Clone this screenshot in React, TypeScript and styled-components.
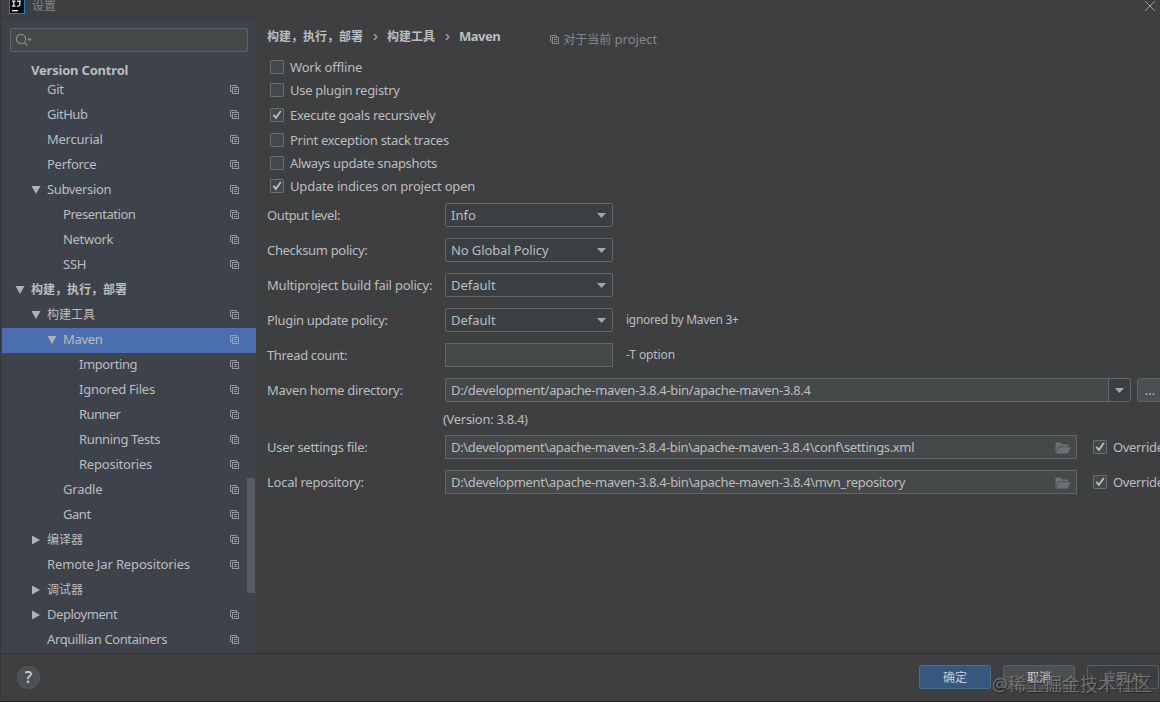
import React from "react";
import styled, { createGlobalStyle, css } from "styled-components";

const GlobalStyle = createGlobalStyle`
  * { box-sizing: border-box; }
  html, body, #root { height: 100%; }
  body {
    margin: 0;
    overflow: hidden;
    background: #3c3f41;
    color: #bbbdbf;
    font-family: "Noto Sans", "Noto Sans CJK SC", sans-serif;
    font-size: 13px;
    line-height: 18px;
  }
`;

const Window = styled.div`
  position: relative;
  width: 1160px;
  height: 702px;
  display: flex;
  flex-direction: column;
  overflow: hidden;
  background: #3d3f41;
  border-left: 1px solid #35383a;
  border-bottom: 1px solid #1f1d1f;
  white-space: nowrap;
`;

const TitleBar = styled.header`
  height: 20px;
  flex: none;
  display: flex;
  align-items: flex-start;
  padding: 0 4px 0 8px;
  color: #85888a;
`;

const TitleText = styled.span`
  margin: -3px auto 0 7px;
  font-size: 12px;
`;

const Logo = styled.svg`
  width: 16px;
  height: 14px;
  flex: none;
`;

const CloseIcon = styled.svg`
  width: 12px;
  height: 12px;
  flex: none;
`;

const Body = styled.div`
  height: 633px;
  flex: none;
  display: flex;
`;

const Sidebar = styled.nav`
  width: 255px;
  flex: none;
  position: relative;
  padding: 8px 0 0 1px;
  background: #3d424b;
  overflow: hidden;
`;

const Search = styled.div`
  width: 238px;
  height: 24px;
  margin: 0 0 6px 8px;
  padding: 4px 4px;
  border: 1px solid #626567;
  border-radius: 2px;
  background: #45494a;

  svg { display: block; }
`;

const RowBox = styled.div<{ $level: number; $selected?: boolean; $short?: boolean }>`
  height: ${(p) => (p.$short ? 20 : 25)}px;
  display: flex;
  align-items: center;
  padding-top: ${(p) => (p.$short ? 3 : 0)}px;
  padding-right: 16px;
  padding-bottom: ${(p) => (p.$short ? 0 : 3)}px;
  padding-left: ${(p) => p.$level * 16 - 3}px;
  ${(p) => p.$selected && css`background: #4b6eaf;`}
`;

const Arrow = styled.svg`
  width: 10px;
  height: 10px;
  margin-top: 1px;
  margin-right: 6px;
  flex: none;
  fill: #afb1b3;
`;

const RowLabel = styled.span<{ $bold?: boolean; $cjk?: boolean; $ls?: number }>`
  flex: 1;
  padding-top: ${(p) => (p.$cjk ? 1 : 0)}px;
  font-weight: ${(p) => (p.$bold ? 700 : 400)};
  font-size: ${(p) => (p.$cjk ? 12 : 13)}px;
  letter-spacing: ${(p) => p.$ls ?? 0}px;
`;

const RowIcon = styled.span<{ $selected?: boolean }>`
  display: flex;
  margin-top: 2px;
  color: ${(p) => (p.$selected ? "#86a8c0" : "#94989d")};
`;

const ScrollThumb = styled.div`
  position: absolute;
  right: 1px;
  top: 458px;
  width: 8px;
  height: 115px;
  background: #585c62;
`;

const Content = styled.main`
  flex: 1;
  min-width: 0;
  overflow: hidden;
  padding: 7px 0 0 11px;
`;

const Crumbs = styled.div`
  height: 20px;
  display: flex;
  align-items: center;
  font-weight: 700;
`;

const Crumb = styled.span<{ $cjk?: boolean }>`
  font-size: ${(p) => (p.$cjk ? 12 : 13)}px;
  letter-spacing: ${(p) => (p.$cjk ? 0 : -0.5)}px;
  padding-bottom: ${(p) => (p.$cjk ? 0 : 2)}px;
`;

const Chevron = styled.svg`
  width: 5px;
  height: 8px;
  margin: 0 9px 0 10px;
`;

const Scope = styled.span`
  display: flex;
  align-items: center;
  gap: 3px;
  margin: 5px 0 0 50px;
  color: #85888a;
  font-weight: 400;
  font-size: 13px;
`;

const ScopeCjk = styled.span`
  font-size: 12px;
`;

const Checks = styled.div`
  padding: 8px 0 6px 3px;
`;

const CheckRow = styled.label<{ $h: number; $ls?: number }>`
  height: ${(p) => p.$h}px;
  display: flex;
  align-items: center;
  gap: 6px;
  letter-spacing: ${(p) => p.$ls ?? 0}px;
`;

const Box = styled.span`
  width: 14px;
  height: 14px;
  flex: none;
  border: 1px solid #6b6e70;
  border-radius: 1px;
  background: #43494a;

  svg { display: block; width: 12px; height: 12px; }
`;

const FormRow = styled.div`
  height: 24px;
  display: flex;
  align-items: center;
  margin-bottom: 11px;
`;

const FieldLabel = styled.span<{ $ls?: number }>`
  width: 178px;
  flex: none;
  letter-spacing: ${(p) => p.$ls ?? 0}px;
`;

const Field = styled.div<{ $w: number; $fill?: boolean; $round?: boolean }>`
  width: ${(p) => p.$w}px;
  height: 24px;
  flex: none;
  display: flex;
  align-items: center;
  justify-content: space-between;
  padding-left: 5px;
  border: 1px solid #646769;
  border-radius: ${(p) => (p.$round ? 2 : 0)}px;
  background: ${(p) => (p.$fill ? "#45494a" : "#3c3f41")};
`;

const Value = styled.span<{ $ls?: number }>`
  letter-spacing: ${(p) => p.$ls ?? 0}px;
`;

const DropButton = styled.span<{ $divided?: boolean }>`
  width: 22px;
  height: 22px;
  display: flex;
  align-items: center;
  justify-content: center;
  ${(p) => p.$divided && css`border-left: 1px solid #646769; background: #3c3f41;`}
`;

const Hint = styled.span<{ $ls?: number }>`
  margin-left: 13px;
  font-size: 12px;
  letter-spacing: ${(p) => p.$ls ?? 0}px;
`;

const Browse = styled.button`
  width: 26px;
  height: 24px;
  flex: none;
  margin-left: 6px;
  padding: 0;
  border: 1px solid #5e6263;
  border-radius: 3px;
  background: #4c5052;
  color: #bbbdbf;
  font: inherit;
`;

const Version = styled.div`
  height: 18px;
  margin: -3px 0 7px 176px;
  letter-spacing: -0.31px;
`;

const FolderIcon = styled.svg`
  width: 16px;
  height: 12px;
  margin-top: 1px;
  margin-right: 5px;
`;

const Override = styled.label`
  display: flex;
  align-items: center;
  gap: 6px;
  margin-left: 16px;
  letter-spacing: -0.35px;
`;

const Footer = styled.footer`
  flex: 1;
  display: flex;
  align-items: center;
  gap: 12px;
  padding: 0 1px 1px 16px;
  border-top: 1px solid #303335;
`;

const Help = styled.button`
  width: 23px;
  height: 23px;
  margin-right: auto;
  padding: 0;
  border: 1px solid #5a5e60;
  border-radius: 50%;
  background: #4c5052;
  color: #c3c5c6;
  font: 600 16px/21px "Noto Sans", sans-serif;
`;

const Button = styled.button<{ $kind: "primary" | "normal" | "disabled" }>`
  width: 72px;
  height: 24px;
  padding: 1px 0 0;
  border: 1px solid ${(p) => (p.$kind === "primary" ? "#4c708c" : "#5e6062")};
  border-radius: 3px;
  background: ${(p) => ({ primary: "#365880", normal: "#4c5052", disabled: "#3c3f41" })[p.$kind]};
  color: ${(p) => (p.$kind === "disabled" ? "#777a7c" : "#c9cbcd")};
  font: 12px/20px "Noto Sans", "Noto Sans CJK SC", sans-serif;
`;

const Watermark = styled.div`
  position: absolute;
  right: 8px;
  bottom: 5px;
  color: rgba(150, 150, 150, 0.62);
  font-size: 18px;
  line-height: 24px;
  text-shadow: 1px 1px 1px rgba(20, 20, 20, 0.6);
`;

const CopyIcon = () => (
  <svg width="10" height="10" viewBox="0 0 10 10" fill="none" stroke="currentColor" strokeWidth="1">
    <path d="M2.5 6.5H.5V.5H6.5V2.5" />
    <rect x="2.5" y="2.5" width="6" height="6" />
    <path d="M4 4.5H7M4 6.5H7" />
  </svg>
);

const Check = ({ on }: { on?: boolean }) => (
  <Box>
    {on && (
      <svg viewBox="0 0 12 12" fill="none" stroke="#b8babb" strokeWidth="1.9">
        <path d="M2.4 5.8L4.9 8.9L9.8 2" />
      </svg>
    )}
  </Box>
);

const DownTriangle = () => (
  <svg width="9" height="5" viewBox="0 0 9 5">
    <path d="M0 0H9L4.5 5Z" fill="#a4a7a9" />
  </svg>
);

const Folder = () => (
  <FolderIcon viewBox="0 0 16 12">
    <path d="M0.5 11V0.5H5.5L7 2.5H13V4.5H3.5Z" fill="#6c7173" />
    <path d="M4 5.3H15.5L12.8 11.5H1Z" fill="#6c7173" />
  </FolderIcon>
);

type Item = {
  label: string;
  level: number;
  open?: boolean;
  closed?: boolean;
  bold?: boolean;
  cjk?: boolean;
  noIcon?: boolean;
  selected?: boolean;
  short?: boolean;
  ls?: number;
};

const items: Item[] = [
  { label: "Version Control", level: 1, bold: true, noIcon: true, short: true, ls: -0.2 },
  { label: "Git", level: 2, ls: -0.3 },
  { label: "GitHub", level: 2, ls: -0.45 },
  { label: "Mercurial", level: 2, ls: -0.25 },
  { label: "Perforce", level: 2, ls: -0.28 },
  { label: "Subversion", level: 2, open: true, ls: -0.35 },
  { label: "Presentation", level: 3, ls: -0.45 },
  { label: "Network", level: 3, ls: -0.3 },
  { label: "SSH", level: 3, ls: -0.2 },
  { label: "构建，执行，部署", level: 1, open: true, bold: true, cjk: true, noIcon: true },
  { label: "构建工具", level: 2, open: true, cjk: true },
  { label: "Maven", level: 3, open: true, selected: true, ls: -0.3 },
  { label: "Importing", level: 4, ls: -0.42 },
  { label: "Ignored Files", level: 4, ls: -0.25 },
  { label: "Runner", level: 4, ls: -0.6 },
  { label: "Running Tests", level: 4, ls: -0.36 },
  { label: "Repositories", level: 4, ls: -0.22 },
  { label: "Gradle", level: 3, ls: -0.2 },
  { label: "Gant", level: 3, ls: -0.45 },
  { label: "编译器", level: 2, closed: true, cjk: true },
  { label: "Remote Jar Repositories", level: 2, ls: -0.14 },
  { label: "调试器", level: 2, closed: true, cjk: true, noIcon: true },
  { label: "Deployment", level: 2, closed: true, ls: -0.45 },
  { label: "Arquillian Containers", level: 2, ls: -0.38 },
];

const checks = [
  { label: "Work offline", h: 23, ls: -0.17 },
  { label: "Use plugin registry", h: 23, ls: -0.3 },
  { label: "Execute goals recursively", on: true, h: 27, ls: -0.29 },
  { label: "Print exception stack traces", h: 23, ls: -0.29 },
  { label: "Always update snapshots", h: 23, ls: -0.34 },
  { label: "Update indices on project open", on: true, h: 23, ls: -0.18 },
];

const selects = [
  { label: "Output level:", value: "Info", ls: -0.4 },
  { label: "Checksum policy:", value: "No Global Policy", ls: -0.32, valueLs: -0.1 },
  { label: "Multiproject build fail policy:", value: "Default", ls: -0.22 },
  { label: "Plugin update policy:", value: "Default", hint: "ignored by Maven 3+", ls: -0.33 },
];

const files = [
  {
    label: "User settings file:",
    value: "D:\\development\\apache-maven-3.8.4-bin\\apache-maven-3.8.4\\conf\\settings.xml",
    ls: -0.28,
    valueLs: -0.345,
  },
  {
    label: "Local repository:",
    value: "D:\\development\\apache-maven-3.8.4-bin\\apache-maven-3.8.4\\mvn_repository",
    ls: -0.25,
    valueLs: -0.335,
  },
];

const CrumbArrow = () => (
  <Chevron viewBox="0 0 5 8" fill="none" stroke="#a9abad" strokeWidth="1.2">
    <path d="M1 1L3.8 4L1 7" />
  </Chevron>
);

export default function App() {
  return (
    <Window>
      <GlobalStyle />
      <TitleBar>
        <Logo viewBox="0 0 16 14">
          <rect x="0.5" y="-2" width="15" height="15.5" fill="#07090c" stroke="#2878c8" />
          <path d="M3 1.2H6.5M4.8 1.2V6.2M3 6.2H6.5M8 1.2H11.8M10.8 1.2V5Q10.6 6.3 9.2 6.2H8" fill="none" stroke="#e8eaec" strokeWidth="1.3" />
          <rect x="3" y="10" width="6" height="1.3" fill="#e8eaec" />
        </Logo>
        <TitleText>设置</TitleText>
        <CloseIcon viewBox="0 0 12 12" stroke="#999c9e" strokeWidth="1">
          <path d="M1 1L11 11M11 1L1 11" />
        </CloseIcon>
      </TitleBar>
      <Body>
        <Sidebar>
          <Search>
            <svg width="20" height="14" viewBox="0 0 20 14" fill="none" stroke="#868a8c" strokeWidth="1.2">
              <circle cx="6" cy="6" r="4.6" />
              <path d="M9.3 9.3L12.5 12.5" />
              <path d="M12 5.5H17L14.5 8.3Z" fill="#868a8c" stroke="none" />
            </svg>
          </Search>
          {items.map((it) => (
            <RowBox key={it.label} $level={it.level} $selected={it.selected} $short={it.short}>
              <Arrow viewBox="0 0 10 10">
                {it.open && <path d="M0.5 1H9.5L5 9Z" />}
                {it.closed && <path d="M1 0.5V9.5L9 5Z" />}
              </Arrow>
              <RowLabel $bold={it.bold} $cjk={it.cjk} $ls={it.ls}>{it.label}</RowLabel>
              {!it.noIcon && (
                <RowIcon $selected={it.selected}>
                  <CopyIcon />
                </RowIcon>
              )}
            </RowBox>
          ))}
          <ScrollThumb />
        </Sidebar>
        <Content>
          <Crumbs>
            <Crumb $cjk>构建，执行，部署</Crumb>
            <CrumbArrow />
            <Crumb $cjk>构建工具</Crumb>
            <CrumbArrow />
            <Crumb>Maven</Crumb>
            <Scope>
              <CopyIcon />
              <span><ScopeCjk>对于当前</ScopeCjk> project</span>
            </Scope>
          </Crumbs>
          <Checks>
            {checks.map((c) => (
              <CheckRow key={c.label} $h={c.h} $ls={c.ls}>
                <Check on={c.on} />
                {c.label}
              </CheckRow>
            ))}
          </Checks>
          {selects.map((s) => (
            <FormRow key={s.label}>
              <FieldLabel $ls={s.ls}>{s.label}</FieldLabel>
              <Field $w={168} $round>
                <Value $ls={s.valueLs}>{s.value}</Value>
                <DropButton><DownTriangle /></DropButton>
              </Field>
              {s.hint && <Hint $ls={-0.3}>{s.hint}</Hint>}
            </FormRow>
          ))}
          <FormRow>
            <FieldLabel $ls={-0.36}>Thread count:</FieldLabel>
            <Field $w={168} $fill />
            <Hint $ls={-0.1}>-T option</Hint>
          </FormRow>
          <FormRow>
            <FieldLabel $ls={-0.27}>Maven home directory:</FieldLabel>
            <Field $w={686} $fill $round>
              <Value $ls={-0.33}>D:/development/apache-maven-3.8.4-bin/apache-maven-3.8.4</Value>
              <DropButton $divided><DownTriangle /></DropButton>
            </Field>
            <Browse>...</Browse>
          </FormRow>
          <Version>(Version: 3.8.4)</Version>
          {files.map((f) => (
            <FormRow key={f.label}>
              <FieldLabel $ls={f.ls}>{f.label}</FieldLabel>
              <Field $w={632} $fill>
                <Value $ls={f.valueLs}>{f.value}</Value>
                <Folder />
              </Field>
              <Override>
                <Check on />
                Override
              </Override>
            </FormRow>
          ))}
        </Content>
      </Body>
      <Footer>
        <Help>?</Help>
        <Button $kind="primary">确定</Button>
        <Button $kind="normal">取消</Button>
        <Button $kind="disabled">应用(A)</Button>
      </Footer>
      <Watermark>@稀土掘金技术社区</Watermark>
    </Window>
  );
}
